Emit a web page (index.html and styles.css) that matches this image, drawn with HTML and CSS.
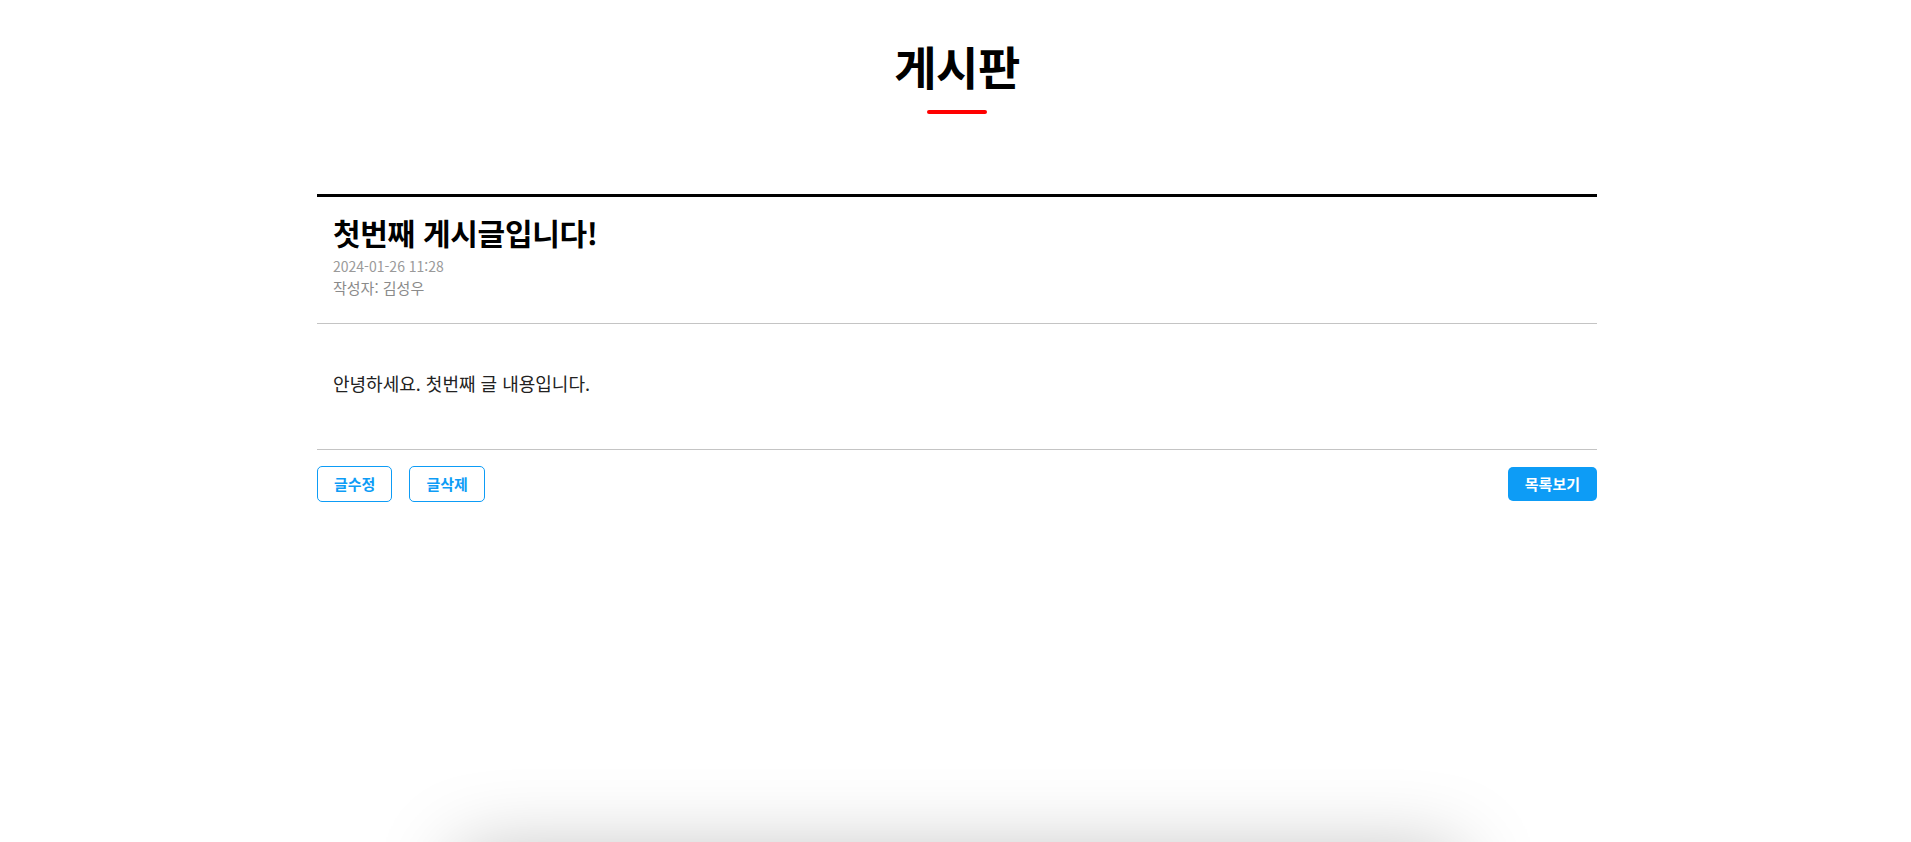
FILE: index.html
```html
<!DOCTYPE html>
<html lang="ko">
<head>
<meta charset="utf-8">
<title>게시판</title>
<link rel="stylesheet" href="styles.css">
</head>
<body>
<div class="page">
  <header class="board-head">
    <h1 class="board-title">게시판</h1>
    <span class="board-bar"></span>
  </header>
  <main class="board">
    <article class="post">
      <div class="post-head">
        <h2 class="post-title">첫번째 게시글입니다!</h2>
        <div class="post-date">2024-01-26 11:28</div>
        <div class="post-author">작성자: 김성우</div>
      </div>
      <div class="post-body">안녕하세요. 첫번째 글 내용입니다.</div>
    </article>
    <div class="actions">
      <div class="actions-left">
        <button class="btn btn-outline" type="button">글수정</button>
        <button class="btn btn-outline" type="button">글삭제</button>
      </div>
      <button class="btn btn-fill" type="button">목록보기</button>
    </div>
  </main>
  <div class="footer-shade"></div>
</div>
</body>
</html>
```

FILE: styles.css
```css
html, body {
  margin: 0;
  padding: 0;
  height: 100%;
  overflow: hidden;
  background: #fff;
}
body {
  font-family: "Noto Sans CJK KR", "Noto Sans", sans-serif;
  color: #111;
}
.page {
  position: relative;
  height: 100vh;
  overflow: hidden;
  padding-left: 3px;
  box-sizing: border-box;
}
.board-head {
  display: flex;
  flex-direction: column;
  align-items: center;
  padding-top: 40px;
}
.board-title {
  margin: 0;
  font-size: 46px;
  line-height: 50px;
  font-weight: 700;
  color: #000;
  letter-spacing: -0.5px;
}
.board-bar {
  display: block;
  width: 60px;
  height: 4px;
  margin-top: 20px;
  border-radius: 2px;
  background: #ff0000;
}
.board {
  width: 1280px;
  margin: 80px auto 0;
}
.post {
  border-top: 3px solid #000;
}
.post-head {
  padding: 15px 16px 24px;
  border-bottom: 1px solid #c4c4c4;
}
.post-title {
  margin: 0;
  font-size: 30px;
  line-height: 40px;
  font-weight: 700;
  color: #000;
  letter-spacing: -0.3px;
}
.post-date {
  margin-top: 4px;
  font-size: 14px;
  line-height: 21px;
  color: #9a9a9a;
}
.post-author {
  font-size: 15px;
  line-height: 22px;
  color: #8a8a8a;
}
.post-body {
  padding: 47px 16px 54px;
  font-size: 18px;
  line-height: 24px;
  color: #222;
  border-bottom: 1px solid #c4c4c4;
}
.actions {
  display: flex;
  align-items: center;
  justify-content: space-between;
  margin-top: 16px;
}
.actions-left {
  display: flex;
  gap: 17px;
}
.btn {
  font-family: inherit;
  font-size: 15px;
  font-weight: 700;
  line-height: 20px;
  border-radius: 5px;
  cursor: pointer;
}
.btn-outline {
  height: 36px;
  padding: 0 16px;
  background: #fff;
  border: 1px solid #0d9cf6;
  color: #0d9cf6;
}
.btn-fill {
  height: 34px;
  padding: 0 17px;
  background: #0d9cf6;
  border: none;
  color: #fff;
}
.footer-shade {
  position: absolute;
  left: 50%;
  top: 852px;
  width: 1000px;
  height: 200px;
  margin-left: -498px;
  background: #fff;
  box-shadow: 0 0 80px rgba(0, 0, 0, 0.26);
}
```
